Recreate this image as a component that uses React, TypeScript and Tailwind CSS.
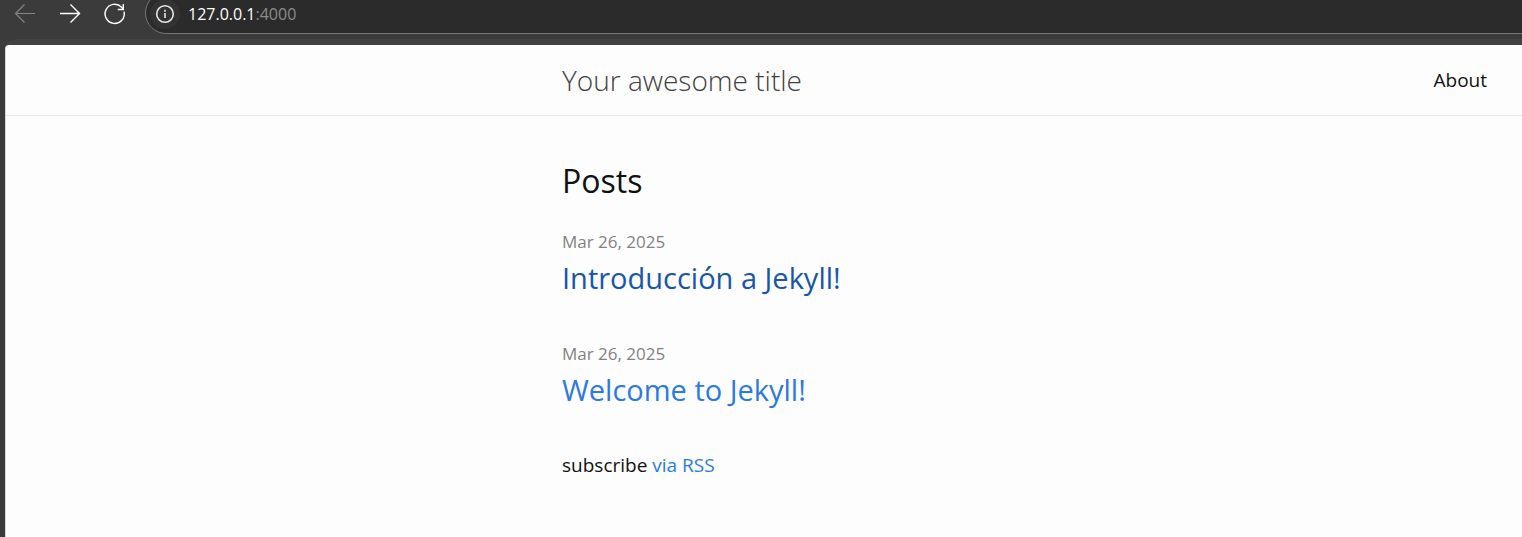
import React from "react";

type Post = { date: string; title: string; href: string; visited: boolean };

const posts: Post[] = [
  { date: "Mar 26, 2025", title: "Introducción a Jekyll!", href: "#introduccion", visited: true },
  { date: "Mar 26, 2025", title: "Welcome to Jekyll!", href: "#welcome", visited: false },
];

function BrowserBar() {
  return (
    <div className="flex h-[39px] items-start overflow-hidden bg-[#3b3b3b]">
      <div className="flex h-7 shrink-0 items-center gap-[21px] pl-3 text-white">
        <button type="button" aria-label="Back" className="text-[#858585]">
          <svg width="24" height="24" viewBox="0 0 24 24" fill="none" stroke="currentColor" strokeWidth="1.2">
            <path d="M23 11.5H3.5M12.5 2.5l-9 9 9 9" />
          </svg>
        </button>
        <button type="button" aria-label="Forward">
          <svg width="24" height="24" viewBox="0 0 24 24" fill="none" stroke="currentColor" strokeWidth="1.4">
            <path d="M3 11.5h19.5M13.5 2.5l9 9-9 9" />
          </svg>
        </button>
        <button type="button" aria-label="Reload">
          <svg width="24" height="24" viewBox="0 0 24 24" fill="none" stroke="currentColor" strokeWidth="1.4">
            <path d="M22 9.6A9.6 9.6 0 1 1 19.6 5.2l1.7 2" />
            <path d="M21.3 2v5.5h-5.6" />
          </svg>
        </button>
      </div>
      <div className="-mt-2 ml-[19px] -mr-6 flex h-[42px] flex-1 items-center rounded-[21px] border border-[#757575] bg-[#2b2b2b] pt-px pl-1">
        <button
          type="button"
          aria-label="View site information"
          className="flex size-[30px] shrink-0 items-center justify-center rounded-full bg-[#333333] text-[#e6e6e6]"
        >
          <svg width="20" height="20" viewBox="0 0 20 20" fill="none" stroke="currentColor" strokeWidth="1.6">
            <circle cx="10" cy="10" r="8.3" />
            <path d="M10 9v5" />
            <path d="M10 5.8v2" />
          </svg>
        </button>
        <div className="ml-2 font-['Open_Sans','Noto_Sans',sans-serif] text-[16px] leading-6 text-white">
          127.0.0.1<span className="text-[#8c8c8c]">:4000</span>
        </div>
      </div>
    </div>
  );
}

export default function App() {
  return (
    <div className="flex min-h-screen flex-col bg-[#3b3b3b]">
      <BrowserBar />
      <div className="ml-[5px] flex flex-1 flex-col rounded-tl-xl bg-[#424242] pt-[6px]">
        <div className="flex-1 rounded-tl border-l border-[#d8d8d8] bg-[#fdfdfd] font-['Open_Sans','Noto_Sans',sans-serif] text-[#111111]">
          <header className="border-b border-[#e8e8e8]">
            <div className="mr-[35px] ml-auto flex h-[70px] max-w-[925px] items-center justify-between">
              <a href="#home" className="text-[28px] leading-[56px] font-light text-[#424242]">
                Your awesome title
              </a>
              <nav>
                <a href="#about" className="text-[19px] leading-7">
                  About
                </a>
              </nav>
            </div>
          </header>
          <main className="mr-[35px] ml-auto max-w-[925px] pt-10">
            <h2 className="text-[32px] leading-[50px]">Posts</h2>
            <ul className="mt-5">
              {posts.map((post) => (
                <li key={post.title} className="mb-10">
                  <span className="block text-[17px] leading-8 text-[#828282]">{post.date}</span>
                  <h3 className="text-[29px] leading-10">
                    <a href={post.href} className={post.visited ? "text-[#1756a9]" : "text-[#2a7ae2]"}>
                      {post.title}
                    </a>
                  </h3>
                </li>
              ))}
            </ul>
            <p className="text-[19px] leading-[30px]">
              subscribe{" "}
              <a href="#feed" className="text-[#2a7ae2]">
                via RSS
              </a>
            </p>
          </main>
        </div>
      </div>
    </div>
  );
}
